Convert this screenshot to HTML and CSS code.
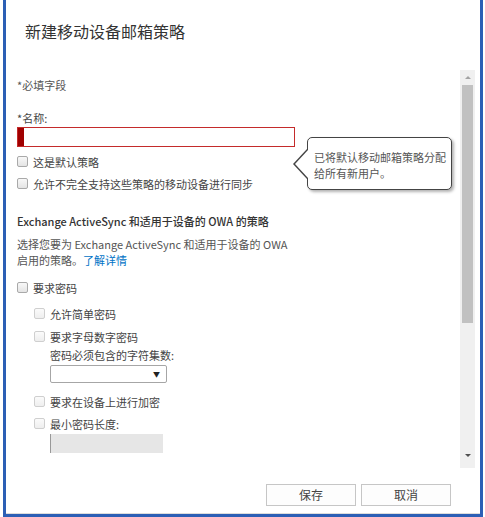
FILE: index.html
```html
<!DOCTYPE html>
<html lang="zh-CN">
<head>
<meta charset="utf-8">
<link rel="stylesheet" href="styles.css">
</head>
<body>
<div class="frame">
  <div class="title">新建移动设备邮箱策略</div>
  <div class="main">
    <div class="content">
      <div class="required">*必填字段</div>
      <div class="label-name">*名称:</div>
      <div class="name-input"><span class="name-mark"></span></div>
      <div class="check first"><span class="box"></span><span class="text">这是默认策略</span></div>
      <div class="check gap4"><span class="box"></span><span class="text">允许不完全支持这些策略的移动设备进行同步</span></div>
      <div class="section">Exchange ActiveSync 和适用于设备的 OWA 的策略</div>
      <div class="para">选择您要为 Exchange ActiveSync 和适用于设备的 OWA<br>启用的策略。<a class="link">了解详情</a></div>
      <div class="check pwd"><span class="box"></span><span class="text">要求密码</span></div>
      <div class="nested">
        <div class="check dis n1"><span class="box"></span><span class="text">允许简单密码</span></div>
        <div class="check dis n2"><span class="box"></span>
          <div class="text">要求字母数字密码<br>密码必须包含的字符集数:
            <div class="select"><span class="arrow">▼</span></div>
          </div>
        </div>
        <div class="check dis n3"><span class="box"></span><span class="text">要求在设备上进行加密</span></div>
        <div class="check dis n4"><span class="box"></span>
          <div class="text">最小密码长度:
            <div class="dis-input"></div>
          </div>
        </div>
      </div>
      <div class="tip">
        <span class="tip-arrow"></span>
        <span class="tip-arrow-in"></span>
        已将默认移动邮箱策略分配<br>给所有新用户。
      </div>
    </div>
    <div class="scrollbar">
      <span class="sb-up"></span>
      <span class="sb-thumb"></span>
      <span class="sb-down"></span>
    </div>
  </div>
  <div class="footer">
    <button class="btn">保存</button>
    <button class="btn">取消</button>
  </div>
</div>
</body>
</html>
```

FILE: styles.css
```css
html, body {
  margin: 0;
  padding: 0;
  background: #ffffff;
}
body {
  width: 485px;
  height: 517px;
  overflow: hidden;
  font-family: "Noto Sans CJK SC", "Noto Sans", sans-serif;
  color: #444;
}
.frame {
  box-sizing: border-box;
  margin-left: 3px;
  width: 480px;
  height: 517px;
  border: 3px solid #2c5fb5;
  border-top: 0;
  background: #fff;
  display: flex;
  flex-direction: column;
}
.title {
  font-size: 16px;
  line-height: 20px;
  color: #333;
  padding: 21px 0 0 19px;
  height: 49px;
  flex: none;
}
.main {
  display: flex;
  height: 398px;
  flex: none;
}
.content {
  position: relative;
  width: 454px;
  padding-left: 11px;
  box-sizing: border-box;
  overflow: hidden;
  font-size: 11px;
  line-height: 18px;
}
.required {
  margin-top: 6px;
  color: #555;
}
.label-name {
  margin-top: 16px;
  line-height: 16px;
}
.name-input {
  margin-top: 1px;
  width: 278px;
  height: 20px;
  box-sizing: border-box;
  border: 1px solid #c42b2b;
  display: flex;
}
.name-mark {
  width: 6px;
  background: #a00000;
}
.check {
  display: flex;
  align-items: flex-start;
}
.box {
  flex: none;
  width: 11px;
  height: 11px;
  box-sizing: border-box;
  margin: 3px 5px 0 0;
  border: 1px solid #a9a9a9;
  border-radius: 2px;
  background: linear-gradient(#f8f8f8, #e4e4e4);
}
.check.dis .box {
  border-color: #cfcfcf;
  background: linear-gradient(#fbfbfb, #eeeeee);
}
.first { margin-top: 6px; }
.gap4 { margin-top: 4px; }
.section {
  margin-top: 19px;
  font-weight: 500;
  color: #333;
}
.para {
  margin-top: 6px;
  line-height: 16px;
  color: #555;
}
.link {
  color: #0072c6;
}
.pwd { margin-top: 11px; }
.nested {
  padding-left: 17px;
}
.n1 { margin-top: 8px; }
.n2 { margin-top: 5px; }
.n3 { margin-top: 10px; }
.n4 { margin-top: 4px; }
.select {
  margin-top: 1px;
  width: 117px;
  height: 18px;
  box-sizing: border-box;
  border: 1px solid #a6a6a6;
  border-radius: 2px;
  background: #fff;
  display: flex;
  justify-content: flex-end;
  align-items: center;
  padding-right: 6px;
}
.arrow {
  font-size: 7px;
  line-height: 8px;
  color: #222;
}
.dis-input {
  margin-top: 1px;
  width: 113px;
  height: 19px;
  box-sizing: border-box;
  background: #e6e6e6;
  border-left: 1px solid #999;
}
.tip {
  position: absolute;
  left: 301px;
  top: 67px;
  width: 145px;
  height: 53px;
  box-sizing: border-box;
  border: 1px solid #444;
  border-radius: 5px;
  background: #fff;
  box-shadow: 2px 2px 3px rgba(0,0,0,0.3);
  padding: 11px 0 0 6px;
  line-height: 16px;
  color: #555;
}
.tip-arrow {
  position: absolute;
  left: -15px;
  top: 11px;
  width: 0;
  height: 0;
  border-top: 15px solid transparent;
  border-bottom: 15px solid transparent;
  border-right: 14px solid #444;
}
.tip-arrow-in {
  position: absolute;
  left: -13px;
  top: 12px;
  width: 0;
  height: 0;
  border-top: 14px solid transparent;
  border-bottom: 14px solid transparent;
  border-right: 13px solid #fff;
}
.scrollbar {
  width: 15px;
  height: 398px;
  background: #f0f0f0;
  position: relative;
  display: flex;
  flex-direction: column;
  align-items: center;
}
.sb-up {
  margin-top: 6px;
  width: 0;
  height: 0;
  border-left: 3px solid transparent;
  border-right: 3px solid transparent;
  border-bottom: 3px solid #a3a3a3;
}
.sb-thumb {
  margin-top: 6px;
  width: 11px;
  height: 238px;
  background: #c1c1c1;
}
.sb-down {
  margin-top: 131px;
  width: 0;
  height: 0;
  border-left: 3px solid transparent;
  border-right: 3px solid transparent;
  border-top: 3px solid #505050;
}
.footer {
  flex: 1;
  display: flex;
  justify-content: flex-end;
  align-items: flex-start;
  gap: 5px;
  padding: 16px 29px 0 0;
  border-bottom: 1px solid #dcdcdc;
}
.btn {
  width: 90px;
  height: 22px;
  box-sizing: border-box;
  border: 1px solid #c6c6c6;
  background: #fdfdfd;
  font-family: "Noto Sans CJK SC", "Noto Sans", sans-serif;
  font-size: 12px;
  color: #444;
  padding: 0;
  line-height: 20px;
}
```
